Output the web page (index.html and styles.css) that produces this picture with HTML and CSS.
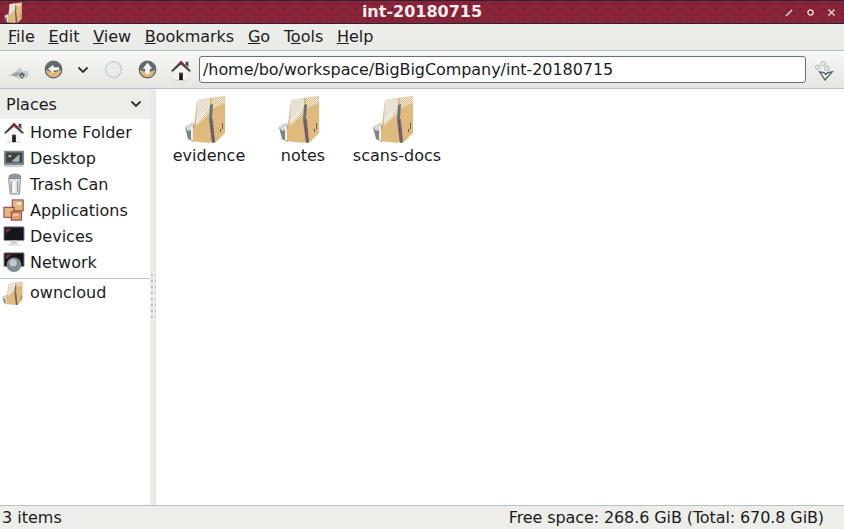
FILE: index.html
```html
<!DOCTYPE html>
<html lang="en">
<head>
<meta charset="utf-8">
<title>int-20180715</title>
<link rel="stylesheet" href="styles.css">
</head>
<body>
<svg class="defs" width="0" height="0" aria-hidden="true">
  <defs>
    <pattern id="dith" width="2" height="2" patternUnits="userSpaceOnUse">
      <rect width="1" height="1" fill="#f2efe6"/>
      <rect x="1" y="1" width="1" height="1" fill="#f2efe6"/>
    </pattern>
    <pattern id="dithdark" width="2" height="2" patternUnits="userSpaceOnUse">
      <rect width="1" height="1" fill="#5b6a72"/>
      <rect x="1" y="1" width="1" height="1" fill="#8f2a3e"/>
    </pattern>
    <symbol id="folder" viewBox="0 0 48 48">
      <path d="M3 32l7-4 4 3-2 16-6-3z" fill="#76858a"/>
      <path d="M3 32l7-4 2 2-3 5-3 1z" fill="#d4dadb"/>
      <path d="M15 5l13-2v45l-19-2 3-16z" fill="#e0b97c"/>
      <path d="M15 5l13-2v8l-6 10-8 8z" fill="#e6e1d5"/>
      <path d="M14 24l8-7 6-7v9l-6 5-8 7z" fill="url(#dith)"/>
      <path d="M28 3l15-2v37l-10 10-5-1z" fill="#e0b97c"/>
      <path d="M30 3l13-2v7l-7 3-6 3z" fill="url(#dith)"/>
      <path d="M28 10l3-1-1 13 3 25-3 1-3-23z" fill="#66737a"/>
      <path d="M28 25l3-1 2 23-3 1z" fill="url(#dithdark)"/>
      <path d="M9 32h2v13H9z" fill="#f4efe4"/>
      <path d="M40 28h1v6h-1zM38 34h1v3h-1z" fill="#6a6250"/>
    </symbol>
    <symbol id="home" viewBox="0 0 24 24">
      <path d="M5 12l7-6 7 6v11H5z" fill="#f6f4ee"/>
      <path d="M4 23h16" stroke="#c9cdcd" stroke-width="1"/>
      <path d="M10 15h4v8h-4z" fill="#17171c"/>
      <path d="M11 15h2v2h-2z" fill="#8f2a3e"/>
      <path d="M1 13L12 2l11 11-2 1-9-8-9 8z" fill="#45423f"/>
      <path d="M10 4l2-2 5 5-1 1z" fill="#8f2a3e"/>
      <path d="M17 3h3v6l-3-3z" fill="#45423f"/>
    </symbol>
    <symbol id="nav" viewBox="0 0 24 24">
      <circle cx="12" cy="12" r="11" fill="#dfb779"/>
      <circle cx="12" cy="12" r="10.500" fill="none" stroke="#5b666c" stroke-width="1.500"/>
      <path d="M2 12a10 10 0 0 1 20 0c-3 2-6 3-10 3s-7-1-10-3z" fill="#5f6a70"/>
    </symbol>
  </defs>
</svg>
<div class="window">
  <header class="titlebar">
    <svg class="title-icon"><use href="#folder"/></svg>
    <h1 class="title">int-20180715</h1>
    <div class="wm-buttons">
      <svg class="wm" viewBox="0 0 9 9"><path d="M1 8L7 2" stroke="#f3e6e8" stroke-width="1.2" fill="none"/></svg>
      <svg class="wm" viewBox="0 0 9 9"><circle cx="4.5" cy="4.5" r="2.6" stroke="#f3e6e8" stroke-width="1.3" fill="none"/></svg>
      <svg class="wm" viewBox="0 0 9 9"><path d="M1.500 1.500l6 6M7.500 1.500l-6 6" stroke="#f3e6e8" stroke-width="1.200" fill="none"/></svg>
    </div>
  </header>
  <nav class="menubar">
    <span class="menu"><u>F</u>ile</span>
    <span class="menu"><u>E</u>dit</span>
    <span class="menu"><u>V</u>iew</span>
    <span class="menu"><u>B</u>ookmarks</span>
    <span class="menu"><u>G</u>o</span>
    <span class="menu">T<u>o</u>ols</span>
    <span class="menu"><u>H</u>elp</span>
  </nav>
  <div class="toolbar">
    <svg class="tool-back" viewBox="0 0 22 16"><path d="M0 12l8-5 5-4 1 4h6v6l-9 2-4-3z" fill="#c3cbcd"/><path d="M3 11l6-3 3 1-4 4z" fill="#97a4a9"/><path d="M14 8l3 3-3 4-3-4z" fill="#55636a"/><path d="M13 11h2v2h-2z" fill="#dfb779"/></svg>
    <svg class="tool-nav" viewBox="0 0 24 24"><use href="#nav"/><path d="M5 11l7-5v3h7v4h-5l-2 1v3z" fill="#f5f5f2"/></svg>
    <svg class="chev" viewBox="0 0 12 8"><path d="M1.500 1.500L6 6l4.500-4.500" stroke="#2b3033" stroke-width="1.800" fill="none"/></svg>
    <svg class="tool-nav tool-off" viewBox="0 0 24 24"><circle cx="12" cy="12" r="10" fill="#e9ebe9" stroke="#bcc7ca" stroke-width="2" stroke-dasharray="2 1"/></svg>
    <svg class="tool-nav tool-up" viewBox="0 0 24 24"><use href="#nav"/><path d="M12 3l6 8h-3v5l-3 3-3-3v-5H6z" fill="#f5f5f2"/></svg>
    <svg class="tool-home"><use href="#home"/></svg>
    <input class="location" type="text" value="/home/bo/workspace/BigBigCompany/int-20180715" aria-label="Location">
    <svg class="tool-spin" viewBox="0 0 22 24"><circle cx="3" cy="9" r="2.500" fill="#e5e8e8" stroke="#a9b4b8"/><circle cx="9" cy="5" r="2.500" fill="#e5e8e8" stroke="#a9b4b8"/><circle cx="13" cy="10" r="2.500" fill="#e5e8e8" stroke="#a9b4b8"/><path d="M5 14l5 1 2 2 2-2 5-1-8 9z" fill="#f1f1ee" stroke="#59686e" stroke-width="1.500"/></svg>
  </div>
  <main class="main">
    <aside class="sidebar">
      <div class="places-head">
        <span>Places</span>
        <svg class="chev" viewBox="0 0 12 8"><path d="M1.500 1.500L6 6l4.500-4.500" stroke="#2b3033" stroke-width="1.800" fill="none"/></svg>
      </div>
      <ul class="places">
        <li class="place"><svg class="place-icon"><use href="#home"/></svg>Home Folder</li>
        <li class="place"><svg class="place-icon" viewBox="0 0 24 24"><rect x="1" y="4" width="22" height="16" rx="1" fill="#7c8a8f"/><rect x="3" y="6" width="18" height="11" fill="#3c4347"/><path d="M10 15l8-7v8h-8z" fill="#aeb5b5"/><path d="M6 9h3v2H6z" fill="#d9c9a0"/><rect x="2" y="20" width="20" height="2" fill="#c9cdcd"/></svg>Desktop</li>
        <li class="place"><svg class="place-icon" viewBox="0 0 24 24"><ellipse cx="13" cy="4" rx="7" ry="3.500" fill="#8c989b"/><path d="M6 6l13 0-1 17H8z" fill="#dfe2e0" stroke="#7b8588"/><path d="M12 9v12" stroke="#f8f8f6" stroke-width="3"/><path d="M9 9v12M16 9v12" stroke="#7b8588"/></svg>Trash Can</li>
        <li class="place"><svg class="place-icon" viewBox="0 0 24 24"><rect x="10" y="1" width="12" height="12" fill="#e0b97c" stroke="#8f2a3e"/><rect x="1" y="9" width="11" height="11" fill="#e0b97c" stroke="#8f2a3e"/><rect x="9" y="14" width="11" height="9" fill="#dd9f6a" stroke="#8f2a3e"/><rect x="15" y="4" width="5" height="2" fill="#fff"/><rect x="11" y="17" width="6" height="1" fill="#fff"/></svg>Applications</li>
        <li class="place"><svg class="place-icon" viewBox="0 0 24 24"><rect x="1" y="2" width="22" height="15" rx="1" fill="#16171c" stroke="#8d999d"/><path d="M3 4h7l-7 5z" fill="#7c2a3c"/><path d="M9 17h6l1 4H8z" fill="#ccd2d2"/><path d="M5 21h14v2H5z" fill="#e2e5e5"/></svg>Devices</li>
        <li class="place"><svg class="place-icon" viewBox="0 0 24 24"><rect x="1" y="2" width="22" height="15" rx="1" fill="#16171c" stroke="#8d999d"/><path d="M3 4h7l-7 5z" fill="#7c2a3c"/><circle cx="12" cy="15" r="8" fill="#7f8b8f"/><circle cx="11" cy="13" r="4" fill="#bfc7c8"/></svg>Network</li>
        <li class="place place-sep"><svg class="place-icon place-icon-tall"><use href="#folder"/></svg>owncloud</li>
      </ul>
    </aside>
    <div class="handle"><div class="grip"></div></div>
    <section class="files">
      <div class="file"><svg class="file-icon"><use href="#folder"/></svg><span>evidence</span></div>
      <div class="file"><svg class="file-icon"><use href="#folder"/></svg><span>notes</span></div>
      <div class="file"><svg class="file-icon"><use href="#folder"/></svg><span>scans-docs</span></div>
    </section>
  </main>
  <footer class="statusbar">
    <span>3 items</span>
    <span class="free">Free space: 268.6 GiB (Total: 670.8 GiB)</span>
  </footer>
</div>
</body>
</html>
```

FILE: styles.css
```css
* { box-sizing: border-box; }
html, body { margin: 0; padding: 0; }
body {
  width: 844px;
  height: 529px;
  overflow: hidden;
  font-family: "DejaVu Sans", sans-serif;
  font-size: 16px;
  color: #1b1b22;
  background: #eeeeec;
}
.defs { display: block; height: 0; }
.window { display: flex; flex-direction: column; height: 529px; }

.titlebar {
  height: 24px;
  flex: none;
  display: flex;
  align-items: center;
  position: relative;
  background-color: #8a2337;
  background-image:
    radial-gradient(circle at 1px 1px, #3a2a3c 0.6px, transparent 0.9px),
    radial-gradient(circle at 1px 1px, #3a2a3c 0.6px, transparent 0.9px);
  background-size: 12px 10px;
  background-position: 1px 2px, 7px 7px;
  border-top: 1px solid #2b2333;
  border-bottom: 1px solid #2b2333;
  padding-left: 3px;
}
.title-icon { width: 21px; height: 21px; }
.title {
  position: absolute;
  left: 0;
  right: 0;
  top: 1px;
  margin: 0;
  text-align: center;
  color: #f6ecee;
  font-size: 16px;
  line-height: 20px;
  font-weight: 700;
}
.wm-buttons { margin-left: auto; display: flex; gap: 12px; padding-right: 8px; position: relative; }
.wm { width: 9px; height: 9px; display: block; }

.menubar {
  height: 27px;
  flex: none;
  display: flex;
  align-items: center;
  padding-left: 8px;
  gap: 13.7px;
  background: linear-gradient(#eeeeea, #e9e9e5);
  border-bottom: 1px solid #b5c1c5;
}
.menu { line-height: 20px; }

.toolbar {
  height: 38px;
  flex: none;
  display: flex;
  align-items: center;
  background: linear-gradient(#f8f8f6, #e5e5e1);
  border-bottom: 1px solid #b5c1c5;
  padding-left: 8px;
}
.tool-back { width: 22px; height: 16px; margin-right: 14px; margin-top: 5px; }
.tool-nav { width: 19px; height: 19px; flex: none; }
.toolbar .chev { margin: 0 15px 0 14px; }
.tool-up { margin-left: 15px; }
.tool-home { width: 22px; height: 22px; margin: 0 7px 0 13px; flex: none; }
.chev { width: 12px; height: 8px; flex: none; }
.location {
  width: 607px;
  height: 27px;
  flex: none;
  border: 1px solid #5f7378;
  border-radius: 3px;
  background: #fff;
  padding: 0 3px;
  font: 16px "DejaVu Sans", sans-serif;
  letter-spacing: -0.07px;
  color: #1b1b22;
}
.tool-spin { width: 20px; height: 22px; margin-left: 9px; flex: none; }

.main { flex: 1; min-height: 0; display: flex; background: #fff; }
.sidebar { width: 150px; flex: none; display: flex; flex-direction: column; background: #fff; }
.places-head {
  height: 30px;
  flex: none;
  display: flex;
  align-items: center;
  justify-content: space-between;
  padding: 0 8px 0 6px;
  background: #edede9;
}
.places { list-style: none; margin: 0; padding: 0; }
.place {
  height: 26px;
  display: flex;
  align-items: center;
  gap: 5px;
  padding-left: 3px;
  white-space: nowrap;
}
.place-sep { height: 28px; border-top: 1px solid #b5c1c5; margin-top: 3px; }
.place-icon { width: 22px; height: 22px; flex: none; }
.place-icon-tall { width: 24px; height: 24px; margin: 0 0 0 -2px; }
.handle {
  width: 6px;
  flex: none;
  display: flex;
  align-items: center;
  background-color: #e9e9e5;
}
.grip {
  width: 6px;
  height: 48px;
  background-size: 4px 6px;
  background-image:
    radial-gradient(circle at 2px 2px, #b9c2c4 1px, transparent 1.200px),
    radial-gradient(circle at 2px 2px, #fdfdfc 1.300px, transparent 1.500px);
  background-position: 0 0, 1px 0;
}

.files { flex: 1; display: flex; align-items: flex-start; padding-top: 6px; padding-left: 6px; background: #fff; }
.file { width: 94px; display: flex; flex-direction: column; align-items: center; line-height: 20px; }
.file-icon { width: 48px; height: 48px; margin: 0 6px 3px 0; }

.statusbar {
  height: 24px;
  flex: none;
  display: flex;
  align-items: center;
  justify-content: space-between;
  padding: 0 20px 0 2px;
  background: #edede9;
  border-top: 1px solid #b5c1c5;
}
.free { letter-spacing: -0.1px; }
```
